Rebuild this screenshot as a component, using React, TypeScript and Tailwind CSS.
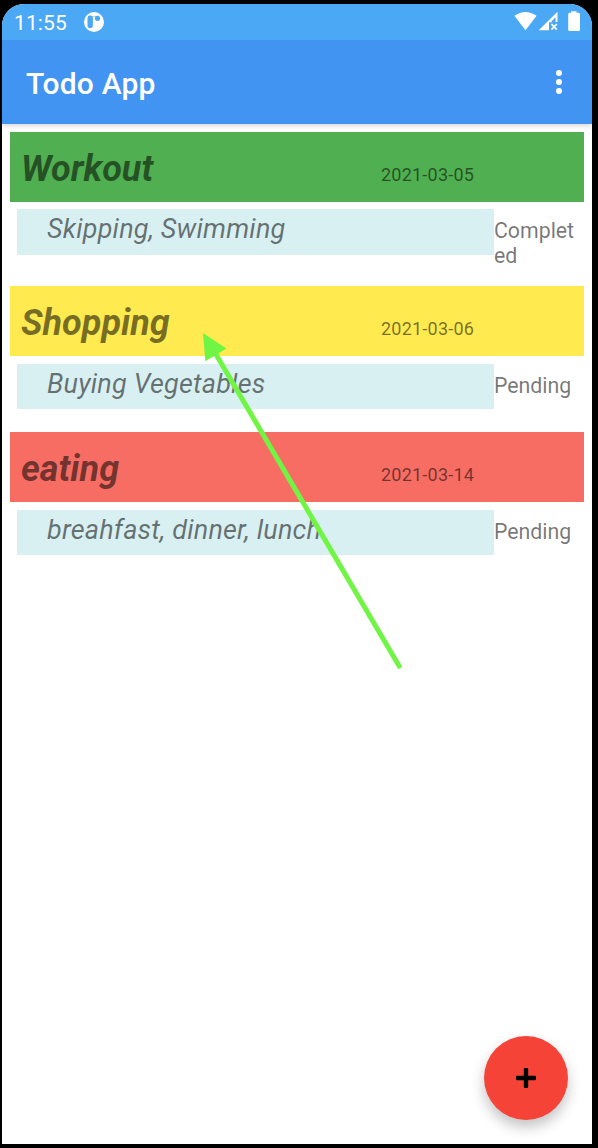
type Todo = {
  title: string;
  date: string;
  description: string;
  status: string;
  header: string;
  spacing: string;
  panel: string;
  statusGap: string;
};

const todos: Todo[] = [
  { title: "Workout", date: "2021-03-05", description: "Skipping, Swimming", status: "Completed", header: "bg-[#50af50]", spacing: "h-[154px]", panel: "mt-[7px] h-[46px]", statusGap: "mt-4" },
  { title: "Shopping", date: "2021-03-06", description: "Buying Vegetables", status: "Pending", header: "bg-[#ffea4f]", spacing: "h-[146px]", panel: "mt-2 h-[45px]", statusGap: "mt-[17px]" },
  { title: "eating", date: "2021-03-14", description: "breahfast, dinner, lunch", status: "Pending", header: "bg-[#f76d63]", spacing: "h-[146px]", panel: "mt-2 h-[45px]", statusGap: "mt-[17px]" },
];

function StatusBar() {
  return (
    <div className="relative z-20 flex h-9 shrink-0 items-center bg-[#4aa8f5] pl-3 text-white">
      <span className="w-[70px] pt-px text-[21px] leading-9 tracking-[0.1px]">11:55</span>
      <svg width="20" height="20" viewBox="0 0 20 20">
        <circle cx="10" cy="10" r="10" fill="white" />
        <rect x="3.5" y="3.6" width="5.4" height="12.6" rx="2.4" fill="#4aa8f5" />
        <path d="M8 4.4h5" stroke="#4aa8f5" strokeWidth="0.5" />
        <circle cx="13.5" cy="6.3" r="2.6" fill="#4aa8f5" />
      </svg>
      <svg width="68" height="22" viewBox="0 0 68 22" fill="white" className="ml-auto mr-[10px]">
        <path d="M0.4 4.8 Q11.5 -3 22.6 4.8 L11.5 19.2 Z" />
        <path d="M24.7 19.2 43.5 .7V11H41.6V6.2L37.8 10V11.2H35V19.2Z" />
        <path d="m37.4 13 5.4 5.6m0-5.6-5.4 5.6" stroke="white" strokeWidth="1.7" />
        <path d="M57.1 1.7V.2h5.4v1.5h2a1.5 1.5 0 0 1 1.5 1.5v15.3a1.5 1.5 0 0 1-1.5 1.5h-8.8a1.5 1.5 0 0 1-1.5-1.5V3.2a1.5 1.5 0 0 1 1.5-1.5Z" />
      </svg>
    </div>
  );
}

function TodoItem({ title, date, description, status, header, spacing, panel, statusGap }: Todo) {
  return (
    <article className={`${spacing} shrink-0 text-black/54`}>
      <div className={`flex h-[70px] items-baseline pl-[11px] pt-4 ${header}`}>
        <h2 className="w-[360px] text-[36px] font-bold italic leading-[42px]">{title}</h2>
        <time className="text-[18px] tracking-[0.22px]">{date}</time>
      </div>
      <div className="flex items-start pl-[7px]">
        <p className={`w-[477px] shrink-0 bg-[#d9f0f2] pl-[30px] text-[27px] italic leading-[40px] tracking-[0.19px] ${panel}`}>{description}</p>
        <p className={`w-[82px] break-all text-[21.3px] leading-[25px] ${statusGap}`}>{status}</p>
      </div>
    </article>
  );
}

export default function App() {
  return (
    <div className="relative h-[1148px] w-[598px] bg-black pl-[2px] pt-1 font-[Roboto,sans-serif]">
      <main className="flex h-[1140px] w-[590px] flex-col overflow-hidden rounded-t-[22px] bg-white">
        <StatusBar />
        <header className="relative z-10 flex h-[84px] shrink-0 items-center justify-between bg-[#4294f3] pl-6 pr-[30px] text-white shadow-[0_1px_6px_rgba(0,0,0,0.2)]">
          <h1 className="mt-1 text-[30px] font-medium leading-9 tracking-[0.2px]">Todo App</h1>
          <button aria-label="More options" className="flex flex-col gap-[3px]">
            <span className="size-[6px] rounded-full bg-white" />
            <span className="size-[6px] rounded-full bg-white" />
            <span className="size-[6px] rounded-full bg-white" />
          </button>
        </header>
        <section className="flex flex-col pl-2 pr-2 pt-2">
          {todos.map((todo) => (
            <TodoItem key={todo.title} {...todo} />
          ))}
        </section>
        <button aria-label="Add todo" className="mb-6 mr-6 mt-auto flex size-[84px] items-center justify-center self-end rounded-full bg-[#f54337] shadow-[0_7px_14px_rgba(0,0,0,0.24)]">
          <svg width="20" height="20" viewBox="0 0 20 20">
            <rect x="7.8" y="0" width="4.4" height="20" rx="1" />
            <rect x="0" y="7.8" width="20" height="4.4" rx="1" />
          </svg>
        </button>
      </main>
      <svg className="pointer-events-none absolute left-0 top-0 z-20" width="598" height="1148" viewBox="0 0 598 1148">
        <path d="M214 351 400.3 668" stroke="#70f545" strokeWidth="5" />
        <path d="m203 333 23.5 15.5L205.3 361.3Z" fill="#70f545" />
      </svg>
    </div>
  );
}
